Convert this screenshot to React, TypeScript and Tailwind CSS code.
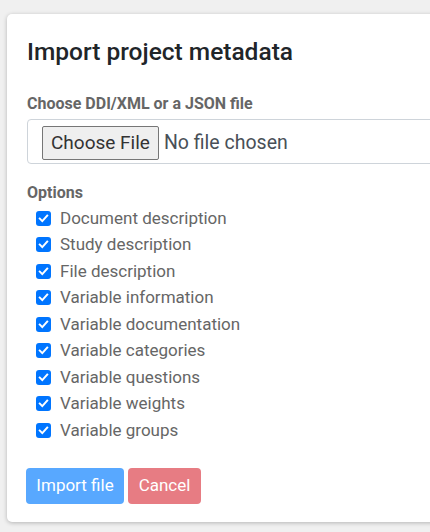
import React from "react";

const options = [
  "Document description",
  "Study description",
  "File description",
  "Variable information",
  "Variable documentation",
  "Variable categories",
  "Variable questions",
  "Variable weights",
  "Variable groups",
];

function Check() {
  return (
    <span className="flex h-[15px] w-[15px] shrink-0 items-center justify-center rounded-[3px] bg-[#0075ff]">
      <svg width="11" height="11" viewBox="0 0 11 11" fill="none">
        <path d="M1.8 5.6 L4.3 8.1 L9.2 2.6" stroke="white" strokeWidth="2" strokeLinecap="square" strokeLinejoin="miter" />
      </svg>
    </span>
  );
}

export default function App() {
  return (
    <div className="h-[532px] w-[430px] overflow-hidden bg-[#f0f0f0] pt-[14px] pl-[7px]" style={{ fontFamily: "Roboto, 'Liberation Sans', sans-serif" }}>
      <div className="h-[508px] w-[450px] rounded-[5px] bg-white pl-[20px] pt-[23px] shadow-[0_1px_4px_rgba(0,0,0,0.25)]">
        <h1 className="text-[24.5px] leading-[29px] font-medium text-[#212529]">Import project metadata</h1>
        <div className="mt-[26px] text-[16px] leading-[24px] font-bold text-[#666]">Choose DDI/XML or a JSON file</div>
        <div className="mt-[3px] flex h-[45px] items-center rounded-[4px] border border-[#ced4da] pl-[14px] pt-[3px]">
          <div className="flex h-[34px] items-center rounded-[2px] border border-[#767676] bg-[#efefef] px-[8px] text-[19px] text-[#333]">Choose File</div>
          <span className="ml-[5px] text-[19.5px] text-[#495057]">No file chosen</span>
        </div>
        <div className="mt-[17px] text-[16px] leading-[24px] font-bold text-[#666]">Options</div>
        <div className="flex flex-col pl-[9px]">
          {options.map((o) => (
            <label key={o} className="flex h-[26.5px] items-center text-[17px] text-[#666]">
              <Check />
              <span className="ml-[9px]">{o}</span>
            </label>
          ))}
        </div>
        <div className="mt-[24px] flex gap-[4px] -ml-[1px]">
          <button className="flex h-[36px] w-[98px] items-center justify-center rounded-[4px] bg-[#58a8ff] text-[17px] text-white">Import file</button>
          <button className="flex h-[36px] w-[73px] items-center justify-center rounded-[4px] bg-[#e77c83] text-[17px] text-white">Cancel</button>
        </div>
      </div>
    </div>
  );
}
